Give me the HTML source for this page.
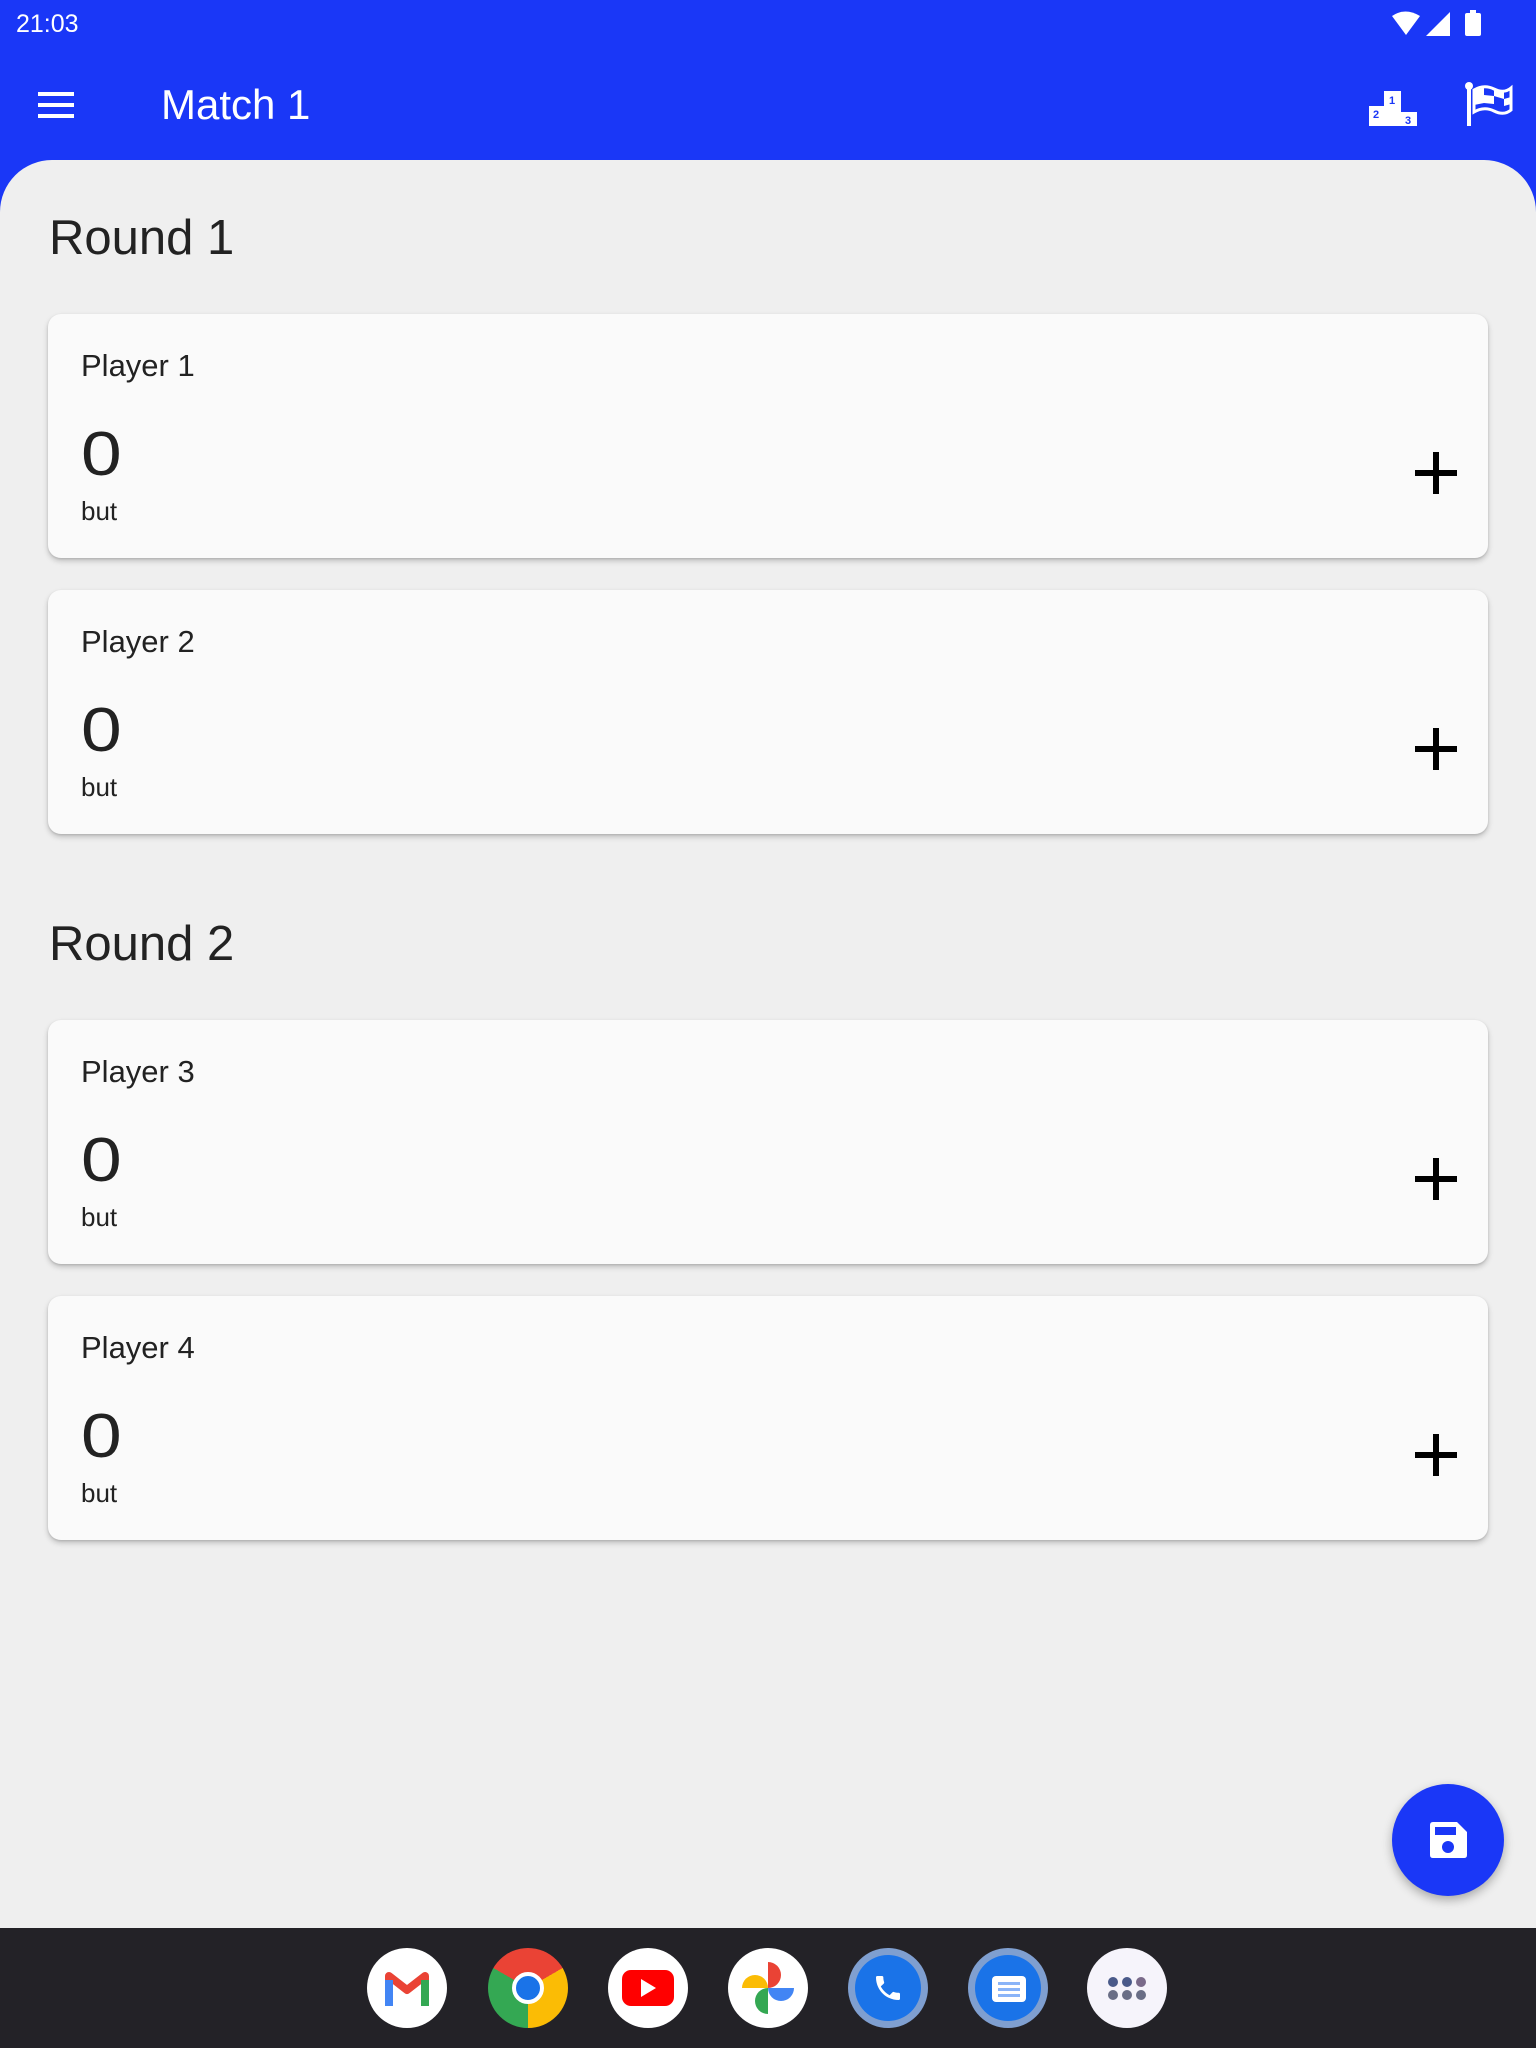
<!DOCTYPE html>
<html><head><meta charset="utf-8"><style>
*{margin:0;padding:0;box-sizing:border-box}
body{width:1536px;height:2048px;overflow:hidden;background:#1a37f7;font-family:"Liberation Sans",sans-serif;position:relative}
.abs{position:absolute}
.content{position:absolute;left:0;top:160px;width:1536px;height:1768px;background:#efefef;border-radius:52px 52px 0 0}
.round{position:absolute;left:49px;font-size:49px;color:#222;font-weight:400}
.card{position:absolute;left:48px;width:1440px;height:244px;background:#fafafa;border-radius:13px;box-shadow:0 3px 6px rgba(0,0,0,.2),0 1px 2px rgba(0,0,0,.12)}
.pn{position:absolute;left:33px;top:34px;font-size:31px;color:#222}
.sc{position:absolute;left:33px;top:110px;font-size:62px;color:#222;line-height:1;transform:scaleX(1.18);transform-origin:left}
.but{position:absolute;left:33px;top:182px;font-size:26px;color:#222}
.plus{position:absolute;left:1367px;top:138px;width:42px;height:42px}
.plus:before{content:"";position:absolute;left:18px;top:0;width:6px;height:42px;background:#000}
.plus:after{content:"";position:absolute;left:0;top:18px;width:42px;height:6px;background:#000}
.dock{position:absolute;left:0;top:1928px;width:1536px;height:120px;background:#232227}
.ic{position:absolute;top:1948px;width:80px;height:80px;border-radius:50%;background:#fff;overflow:hidden}
</style></head><body>
<div class="abs" style="left:16px;top:10px;color:#fff;font-size:25px">21:03</div>
<svg class="abs" style="left:1390px;top:10px" width="130" height="28" viewBox="0 0 130 28">
<path d="M2 6 Q15 -3 30 6 L16 25 Z" fill="#fff"/>
<path d="M36 26 L60 2 L60 26 Z" fill="#fff"/>
<rect x="75" y="3" width="16" height="23" rx="2" fill="#fff"/><rect x="80" y="0" width="6" height="4" fill="#fff"/>
</svg>
<svg class="abs" style="left:38px;top:92px" width="36" height="26"><rect y="0" width="36" height="4" fill="#fff"/><rect y="11" width="36" height="4" fill="#fff"/><rect y="22" width="36" height="4" fill="#fff"/></svg>
<div class="abs" style="left:161px;top:81px;color:#fff;font-size:42px">Match 1</div>
<svg class="abs" style="left:1369px;top:90px" width="48" height="36" viewBox="0 0 48 36">
<rect x="0" y="16" width="16" height="20" fill="#fff"/><rect x="15" y="1" width="17" height="35" fill="#fff"/><rect x="31" y="22" width="17" height="14" fill="#fff"/>
<text x="20" y="14" font-size="11" font-weight="bold" fill="#1a37f7" font-family="Liberation Sans">1</text>
<text x="4" y="28" font-size="11" font-weight="bold" fill="#1a37f7" font-family="Liberation Sans">2</text>
<text x="36" y="34" font-size="11" font-weight="bold" fill="#1a37f7" font-family="Liberation Sans">3</text>
</svg>
<svg class="abs" style="left:1464px;top:82px" width="50" height="44" viewBox="0 0 50 44">
<circle cx="5" cy="4" r="4" fill="#fff"/><rect x="3" y="4" width="4" height="40" fill="#fff"/>
<path d="M10 8 Q20 2 30 7 Q40 12 47 6 L47 28 Q40 34 30 29 Q20 24 10 30 Z" fill="none" stroke="#fff" stroke-width="3"/>
<path d="M10 8 L20 6 L20 13 L10 16Z M30 7 L40 10 L40 17 L30 14Z M20 13 L30 14 L30 22 L20 21Z M40 17 L47 15 L47 22 L40 24Z M10 16 L20 13 L20 21 L10 23Z" fill="#fff"/>
</svg>
<div class="content"></div>
<div class="round" style="top:210px">Round 1</div>
<div class="card" style="top:314px"><div class="pn">Player 1</div><div class="sc">0</div><div class="but">but</div><div class="plus"></div></div>
<div class="card" style="top:590px"><div class="pn">Player 2</div><div class="sc">0</div><div class="but">but</div><div class="plus"></div></div>
<div class="round" style="top:916px">Round 2</div>
<div class="card" style="top:1020px"><div class="pn">Player 3</div><div class="sc">0</div><div class="but">but</div><div class="plus"></div></div>
<div class="card" style="top:1296px"><div class="pn">Player 4</div><div class="sc">0</div><div class="but">but</div><div class="plus"></div></div>
<div class="abs" style="left:1392px;top:1784px;width:112px;height:112px;border-radius:50%;background:#1a37f7;box-shadow:0 4px 10px rgba(0,0,0,.3)"></div>
<svg class="abs" style="left:1430px;top:1822px" width="37" height="36" viewBox="0 0 37 36"><path d="M0 3 Q0 0 3 0 L27 0 L37 10 L37 33 Q37 36 34 36 L3 36 Q0 36 0 33Z" fill="#fff"/><rect x="5" y="5" width="21" height="8" fill="#1a37f7"/><circle cx="18" cy="25" r="6" fill="#1a37f7"/></svg>
<div class="dock"></div>
<div class="ic" style="left:367px"><svg width="80" height="80" viewBox="0 0 80 80"><path d="M22 56 L22 28 L40 42 L58 28 L58 56" fill="none" stroke="#ea4335" stroke-width="8" stroke-linejoin="round"/><rect x="18" y="32" width="8" height="26" fill="#4285f4"/><rect x="54" y="32" width="8" height="26" fill="#34a853"/></svg></div>
<div class="ic" style="left:488px;background:conic-gradient(from -60deg,#ea4335 0 120deg,#fbbc05 120deg 240deg,#34a853 240deg 360deg)"><div class="abs" style="left:24px;top:24px;width:32px;height:32px;border-radius:50%;background:#1a73e8;border:4px solid #fff"></div></div>
<div class="ic" style="left:608px"><div class="abs" style="left:14px;top:22px;width:52px;height:36px;border-radius:9px;background:#f00"></div><svg class="abs" style="left:33px;top:31px" width="16" height="18"><path d="M0 0 L15 9 L0 18Z" fill="#fff"/></svg></div>
<div class="ic" style="left:728px"><svg width="80" height="80" viewBox="0 0 80 80"><path d="M40 40 L40 14 A13 13 0 0 1 40 40Z" fill="#ea4335"/><path d="M40 40 L66 40 A13 13 0 0 1 40 40Z" fill="#4285f4"/><path d="M40 40 L40 66 A13 13 0 0 1 40 40Z" fill="#34a853"/><path d="M40 40 L14 40 A13 13 0 0 1 40 40Z" fill="#fbbc05"/></svg></div>
<div class="ic" style="left:848px;background:#7f9fd0"><div class="abs" style="left:7px;top:7px;width:66px;height:66px;border-radius:50%;background:#1a73e8"></div><svg class="abs" style="left:24px;top:24px" width="32" height="32" viewBox="0 0 24 24"><path d="M6.6 10.8c1.4 2.8 3.8 5.1 6.6 6.6l2.2-2.2c.3-.3.7-.4 1-.2 1.1.4 2.3.6 3.6.6.6 0 1 .4 1 1V20c0 .6-.4 1-1 1C10.6 21 3 13.4 3 4c0-.6.4-1 1-1h3.5c.6 0 1 .4 1 1 0 1.300.2 2.5.6 3.6.1.3 0 .7-.2 1z" fill="#fff"/></svg></div>
<div class="ic" style="left:968px;background:#7f9fd0"><div class="abs" style="left:7px;top:7px;width:66px;height:66px;border-radius:50%;background:#1a73e8"></div><div class="abs" style="left:24px;top:28px;width:34px;height:26px;border-radius:4px;background:#fff"></div><div class="abs" style="left:30px;top:34px;width:22px;height:3px;background:#8ab4f8;box-shadow:0 6px 0 #8ab4f8,0 12px 0 #8ab4f8"></div></div>
<div class="ic" style="left:1087px;background:#f6f4fb"><svg width="80" height="80"><g fill="#4a5a8a"><circle cx="26" cy="34" r="5"/><circle cx="40" cy="34" r="5"/></g><circle cx="54" cy="34" r="5" fill="#7a6a8a"/><g fill="#6a6e86"><circle cx="26" cy="47" r="5"/><circle cx="40" cy="47" r="5"/><circle cx="54" cy="47" r="5"/></g></svg></div>
</body></html>
